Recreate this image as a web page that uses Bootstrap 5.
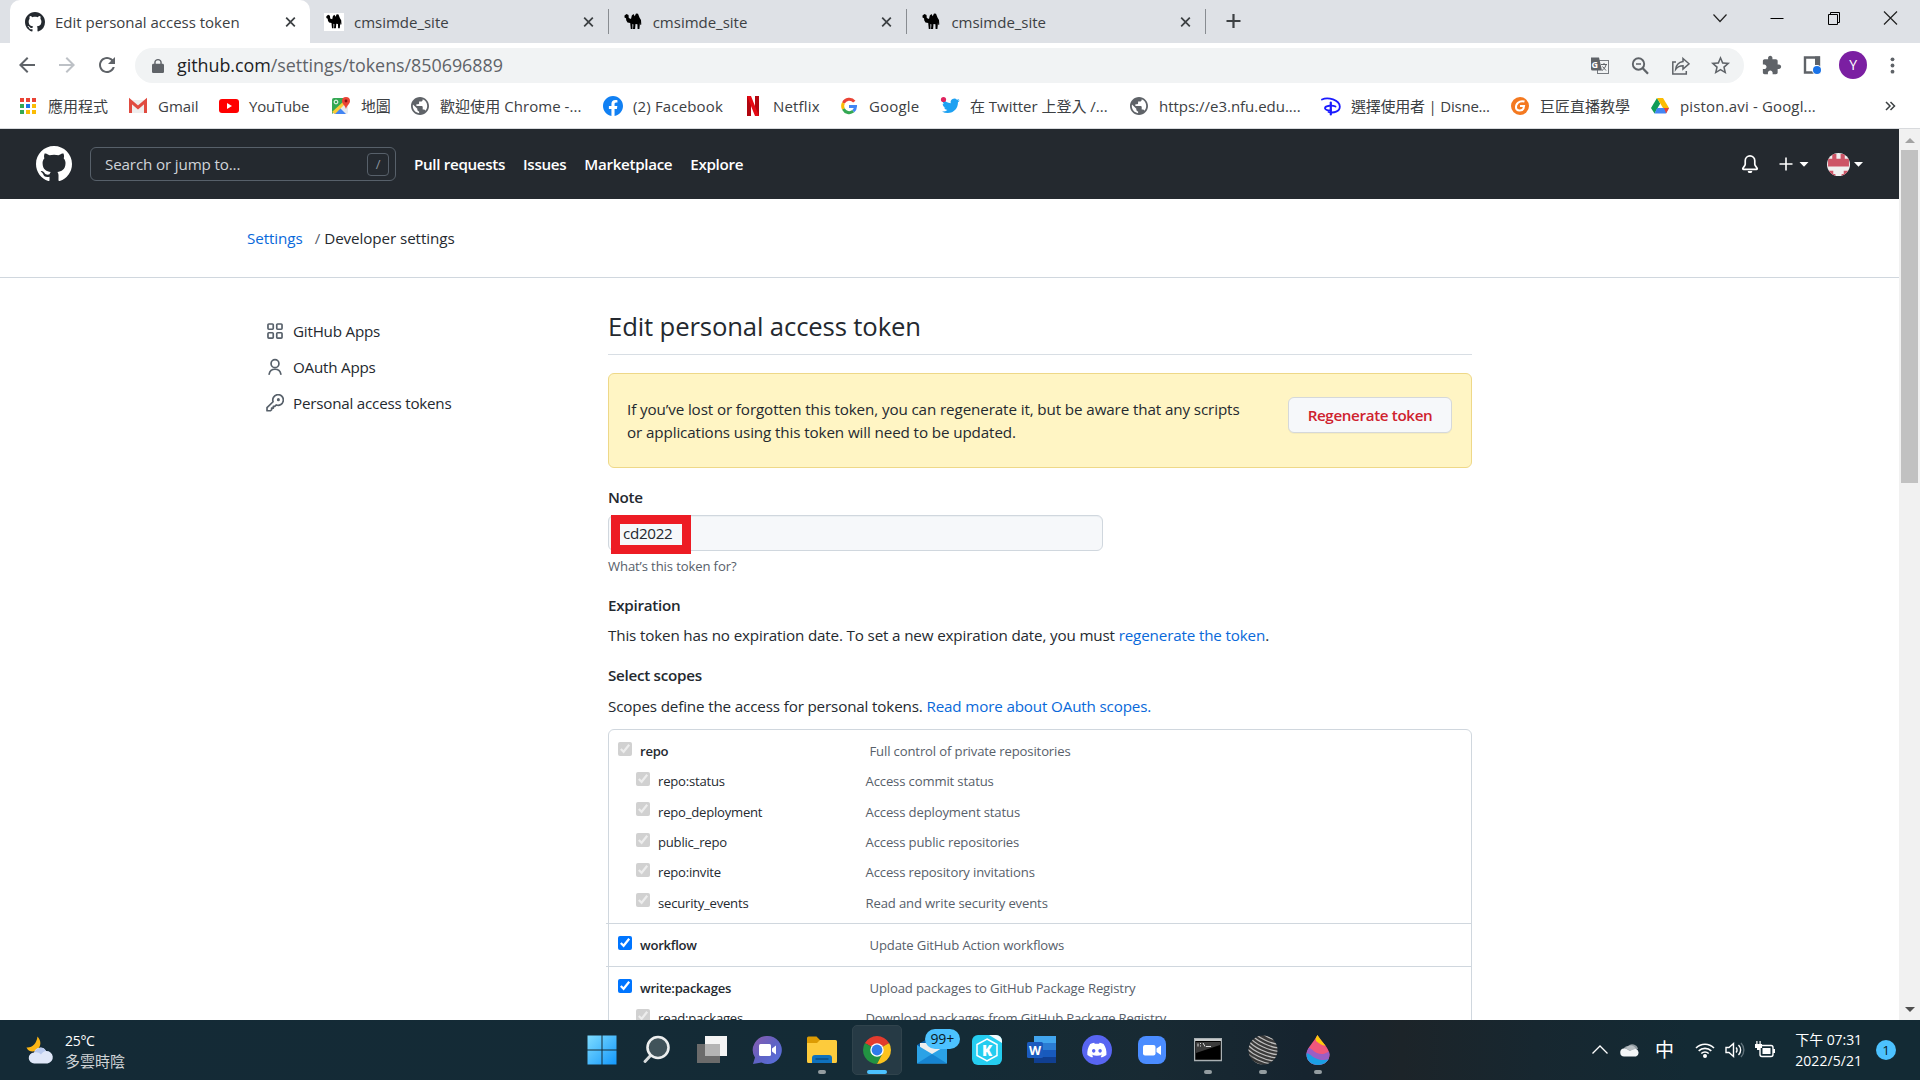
<!DOCTYPE html>
<html lang="zh-Hant">
<head>
<meta charset="utf-8">
<meta name="viewport" content="width=device-width, initial-scale=1">
<title>Edit personal access token</title>
<link href="https://cdn.jsdelivr.net/npm/bootstrap@5.3.0/dist/css/bootstrap.min.css" rel="stylesheet">
<style>
body{font-family:"Open Sans","Noto Sans CJK TC",sans-serif;font-size:15.2px;letter-spacing:-.15px;color:#24292f;height:1080px;overflow:hidden;background:#fff}
a{text-decoration:none;color:#0969da}
svg{display:block;flex:none}
.semi{font-weight:600}

/* tab strip */
.tabstrip{height:43px;background:#dee1e6;padding-left:10px;font-size:15px;letter-spacing:-.01px;color:#3c4043}
.btab{width:298.700px;height:43px;padding:0 0 0 14px}
.btab svg.fav{margin-right:10px}
.btab span:not(.sepr){padding-top:1px}
.btab.on{width:300px;background:#fff;border-radius:10px 10px 0 0;padding:0 14px 0 15px}
.btab .sepr{width:1px;height:25px;background:#888c91;margin-left:14px}
.newtab{margin-left:17px;margin-bottom:1px}
.winbtns{gap:41px;padding-right:22px}
/* toolbar */
.toolbar{height:44px;padding-left:15px}
.omni{width:1609px;height:35px;border-radius:18px;background:#f1f3f4;margin-left:16px;padding:0 13px 0 17px;margin-top:1px}
.omni .url{font-size:17.9px;letter-spacing:-.03px;color:#5f6368;margin-left:13px;line-height:32px;padding-bottom:2px}
.omni .url b{font-weight:400;color:#202124}
.omni .acts{gap:20px}
.avatar{width:28px;height:28px;background:#7b1fa2;color:#fff;font-size:14px;line-height:28px}
/* bookmarks */
.bmarks{height:42px;padding:0 0 3px 18px;font-size:15px;letter-spacing:-.02px;color:#3c4043;border-bottom:1px solid #d8dadd;line-height:38px}
.bm{white-space:nowrap}
.bm svg{margin-right:10px}
.ls-w{letter-spacing:.16px}
.ls-n{letter-spacing:-.22px}
/* header */
.viewport{height:891px}
.gh{height:70px;background:#24292f;color:#fff;padding-left:36px}
.gh .find{width:306px;height:34px;border:1px solid #57606a;border-radius:6px;margin-left:18px;padding:0 6px 0 14px;color:#d0d4d9}
.slash{width:22px;height:23px;border:1px solid #57606a;border-radius:4px;font-size:13px;line-height:20px;color:#8b949e}
.ghnav{margin-left:18px;gap:18px;letter-spacing:-.33px}
.crumbs{height:79px;border-bottom:1px solid #d0d7de;padding-left:247px;letter-spacing:-.08px}
.side{width:608px;padding:35px 0 0 266px;letter-spacing:-.22px}
.side a{color:#24292f;height:36px}
.side svg{margin-right:9px}
.main{width:864px}
.ttl{font-size:25.7px;letter-spacing:-.14px;font-weight:400;line-height:40px;padding:29px 0 7px;border-bottom:1px solid #d8dee4}
.warn{height:95px;margin-top:18px;background:#fff5c4;border:1px solid #eed888;border-radius:6px;padding:23px 19px 0 18px;line-height:23px;letter-spacing:-.11px}
.btn-regen{width:164px;height:36px;border:1px solid #d5d8da;border-radius:6px;background:#f6f8fa;color:#cf222e;padding:0;line-height:35px;font-size:15.2px;letter-spacing:-.36px;box-shadow:0 1px 0 rgba(27,31,36,.04)}
.lbl{line-height:23px;letter-spacing:-.28px}
.note-in{width:495px;height:36px;border:1px solid #d0d7de;border-radius:6px;background:#f6f8fa;padding:0 14px;line-height:34px;letter-spacing:-.3px;box-shadow:inset 0 1px 0 rgba(208,215,222,.25)}
.redbox{position:absolute;left:2px;top:-1px;width:80px;height:39px;border:9px solid #ed1c24}
.fs13{font-size:13.1px;letter-spacing:-.12px}
.muted{color:#57606a}
.scopes{border:1px solid #d0d7de;border-radius:6px;height:400px;margin-top:11px}
.grp{border-top:1px solid #d0d7de;padding:6px 0 0 9px;margin-left:-3px;padding-left:10px}
.grp.first{border-top:0;height:193px}
.grp.mid{height:43px}
.sc{height:30.3px;line-height:30px;font-size:13.1px;letter-spacing:-.14px}
.sc input{width:14px;height:14px;margin:0 8px 5px 2px}
.sc .nm{width:229.5px;letter-spacing:-.27px}
.sc.kid{padding-left:18px}
.sc.kid .nm{width:207.5px;letter-spacing:-.22px}
.sc .ds{color:#57606a}
/* scrollbar */
.sbar{width:21px;background:#f1f1f1}
.thumb{width:17px;height:333px;background:#c1c1c1}
/* taskbar */
.taskbar{height:60px;background:linear-gradient(90deg,#142a36 0,#142b36 50%,#182a33 60%,#16242f 68%,#1c2429 73%,#172730 80%,#132a34 88%,#132a34 100%);color:#fff}
.wx{width:574.500px;padding-left:25px}
.wx .tx,.clock{font-size:14px;line-height:21px;letter-spacing:-.3px}
.wx .cj{font-size:15px;letter-spacing:0;color:#d0d4d6;line-height:20px}
.ico{width:55.05px;height:60px}
.ico .run{position:absolute;bottom:6px;left:50%;width:8px;height:4px;margin-left:-4px;border-radius:2px;background:#949da1}
.ico.act::before{content:"";position:absolute;left:2px;top:5px;width:50px;height:50px;border-radius:5px;background:#263a45;border:1px solid #30434c}
.ico.act .run{width:20px;margin-left:-10px;background:#4cc2ff}
.ico svg{position:relative}
.cnt{position:absolute;left:20px;top:9px;width:35px;height:20px;border-radius:10px;background:#4cc2ff;color:#0a1b25;font-size:14px;line-height:19px}
.ncount{width:20px;height:20px;background:#4cc2ff;color:#0b1c26;font-size:13.5px;line-height:20px;margin:0 24px 0 14px}
</style>
</head>
<body class="d-flex flex-column">

<svg width="0" height="0" class="position-absolute">
  <symbol id="octocat" viewBox="0 0 16 16"><path d="M8 0C3.58 0 0 3.58 0 8c0 3.54 2.29 6.53 5.47 7.59.4.07.55-.17.55-.38 0-.19-.01-.82-.01-1.49-2.01.37-2.53-.49-2.69-.94-.09-.23-.48-.94-.82-1.13-.28-.15-.68-.52-.01-.53.63-.01 1.08.58 1.23.82.72 1.21 1.87.87 2.33.66.07-.52.28-.87.51-1.07-1.78-.2-3.64-.89-3.64-3.95 0-.87.31-1.59.82-2.15-.08-.2-.36-1.02.08-2.12 0 0 .67-.21 2.2.82.64-.18 1.32-.27 2-.27.68 0 1.36.09 2 .27 1.53-1.04 2.2-.82 2.2-.82.44 1.1.16 1.92.08 2.12.51.56.82 1.27.82 2.15 0 3.07-1.87 3.75-3.65 3.95.29.25.54.73.54 1.48 0 1.07-.01 1.93-.01 2.2 0 .21.15.46.55.38A8.013 8.013 0 0016 8c0-4.42-3.58-8-8-8z"/></symbol>
  <symbol id="camel" viewBox="0 0 20 20"><path d="M1.500 3.500l2-1.500 2 1 .3 3L8 7l.8-3.600L10.500 2l1.200 2.200L13 1.500l2 .3 1.600 4 1.400 2.200.3 4.500-1 .5-.3-2.500-.6 6.500h-1.800l-.2-4.700-1.900-.3-.4 5H10l.4-4.500-1-.5.1 5H7.800l-.6-6L4.500 10.500 3.300 8.500 3 6.300 1.500 5.500z"/></symbol>
  <symbol id="x" viewBox="0 0 12 12"><path d="M1.300 1.300l9.400 9.400M10.700 1.300l-9.400 9.400" stroke="#3c4043" stroke-width="1.900" fill="none"/></symbol>
  <symbol id="globe" viewBox="2 2 20 20"><path fill="#5f6368" d="M12 2C6.480 2 2 6.480 2 12s4.480 10 10 10 10-4.480 10-10S17.520 2 12 2zm-1 17.930c-3.950-.49-7-3.850-7-7.930 0-.62.08-1.210.21-1.790L9 15v1c0 1.100.9 2 2 2v1.930zm6.900-2.540c-.26-.81-1-1.390-1.900-1.390h-1v-3c0-.55-.45-1-1-1H8v-2h2c.55 0 1-.45 1-1V7h2c1.100 0 2-.9 2-2v-.41c2.930 1.190 5 4.060 5 7.410 0 2.080-.8 3.970-2.100 5.390z"/></symbol>
</svg>

<!-- tab strip -->
<div class="tabstrip d-flex align-items-center flex-shrink-0">
  <div class="btab on d-flex align-items-center">
    <svg class="fav" width="20" height="20" fill="#24292f"><use href="#octocat"/></svg><span>Edit personal access token</span>
    <svg class="ms-auto" width="11" height="12"><use href="#x"/></svg>
  </div>
  <div class="btab d-flex align-items-center">
    <svg class="fav" width="20" height="18"><rect width="20" height="18" fill="#fff"/><use href="#camel"/></svg><span>cmsimde_site</span>
    <svg class="ms-auto" width="11" height="12"><use href="#x"/></svg><span class="sepr"></span>
  </div>
  <div class="btab d-flex align-items-center">
    <svg class="fav" width="20" height="20"><use href="#camel"/></svg><span>cmsimde_site</span>
    <svg class="ms-auto" width="11" height="12"><use href="#x"/></svg><span class="sepr"></span>
  </div>
  <div class="btab d-flex align-items-center">
    <svg class="fav" width="20" height="20"><use href="#camel"/></svg><span>cmsimde_site</span>
    <svg class="ms-auto" width="11" height="12"><use href="#x"/></svg><span class="sepr"></span>
  </div>
  <svg class="newtab" width="20" height="20" stroke="#3c4043" stroke-width="2.200"><path d="M10.500 3v14M3.500 10h14"/></svg>
  <div class="winbtns d-flex align-items-center ms-auto pb-2">
    <svg width="16" height="14" fill="none" stroke="#222" stroke-width="1.200"><path d="M1.500 3.500l6.500 7 6.500-7"/></svg>
    <svg width="16" height="14" stroke="#000"><path d="M1.500 7.500h13"/></svg>
    <svg width="16" height="14" fill="none" stroke="#000"><path d="M2.500 3.500h9v10h-9zM4.500 3V1.500h9v10H12"/></svg>
    <svg width="15" height="14" fill="none" stroke="#222" stroke-width="1.200"><path d="M1 .5l13 13M14 .5l-13 13"/></svg>
  </div>
</div>

<!-- toolbar -->
<div class="toolbar d-flex align-items-center flex-shrink-0">
  <svg width="24" height="24" viewBox="0 0 24 24" fill="#5f6368"><path d="M20 11H7.830l5.590-5.590L12 4l-8 8 8 8 1.410-1.410L7.830 13H20v-2z"/></svg>
  <svg class="ms-3" width="24" height="24" viewBox="0 0 24 24" fill="#bdc1c6"><path transform="matrix(-1 0 0 1 24 0)" d="M20 11H7.830l5.590-5.590L12 4l-8 8 8 8 1.410-1.410L7.830 13H20v-2z"/></svg>
  <svg class="ms-3" width="24" height="24" viewBox="0 0 24 24" fill="#5f6368"><path d="M17.650 6.350C16.200 4.900 14.210 4 12 4c-4.420 0-7.990 3.580-7.990 8s3.570 8 7.990 8c3.730 0 6.840-2.550 7.730-6h-2.080c-.82 2.330-3.040 4-5.650 4-3.310 0-6-2.690-6-6s2.690-6 6-6c1.660 0 3.140.69 4.220 1.780L13 11h7V4l-2.350 2.350z"/></svg>
  <div class="omni d-flex align-items-center">
    <svg width="12" height="14" viewBox="4 1 16 21" preserveAspectRatio="none" fill="#5f6368"><path d="M18 8h-1V6c0-2.760-2.240-5-5-5S7 3.240 7 6v2H6c-1.100 0-2 .9-2 2v10c0 1.100.9 2 2 2h12c1.100 0 2-.9 2-2V10c0-1.100-.9-2-2-2zM15.100 8H8.900V6c0-1.710 1.390-3.100 3.100-3.100s3.100 1.390 3.100 3.100v2z"/></svg>
    <span class="url"><b>github.com</b>/settings/tokens/850696889</span>
    <div class="acts d-flex align-items-center ms-auto">
      <svg width="20" height="20"><rect x="7.500" y="4.500" width="11" height="13" fill="#f1f3f4" stroke="#777b80"/><path d="M1 1.500h8l3 13H2.500a1.500 1.500 0 0 1-1.500-1.500z" fill="#5f6368"/><text x="1.500" y="11.500" font-size="9" font-weight="700" fill="#fff" font-family="Open Sans">G</text><path d="M11 8.500h6M14 7v1.500M16 9c-1 3-2.500 4.500-4 5.500M12.500 10.500l3.500 4" stroke="#5f6368" fill="none"/></svg>
      <svg width="20" height="20" fill="none" stroke="#5f6368"><circle cx="8.500" cy="8" r="5.700" stroke-width="1.900"/><path d="M12.500 12l5.500 5.700" stroke-width="2.300"/><path d="M6 8h5" stroke-width="1.500"/></svg>
      <svg width="20" height="20" fill="none" stroke="#5f6368" stroke-width="1.500"><path d="M6 6H2.800v12h13.500v-3"/><path d="M13 2.500l6 5.300L13 13v-3.200c-3.500 0-5.500 1-7.300 3.500.5-4.200 2.800-7 7.300-7.700z"/></svg>
      <svg width="21" height="21" viewBox="1 1 22 22" fill="#5f6368"><path d="M22 9.240l-7.190-.62L12 2 9.190 8.630 2 9.240l5.460 4.730L5.820 21 12 17.270 18.180 21l-1.630-7.030L22 9.240zM12 15.400l-3.760 2.270 1-4.280-3.320-2.880 4.380-.38L12 6.100l1.710 4.040 4.380.38-3.320 2.880 1 4.280L12 15.400z"/></svg>
    </div>
  </div>
  <svg style="margin-left:18px" width="20" height="20" viewBox="1 0 23 23" fill="#5f6368"><path d="M20.500 11H19V7c0-1.100-.9-2-2-2h-4V3.500C13 2.120 11.880 1 10.500 1S8 2.120 8 3.500V5H4c-1.100 0-1.990.9-1.990 2v3.800H3.500c1.490 0 2.700 1.210 2.700 2.700s-1.210 2.700-2.700 2.700H2V20c0 1.100.9 2 2 2h3.800v-1.500c0-1.490 1.210-2.700 2.700-2.700s2.700 1.210 2.700 2.700V22H17c1.100 0 2-.9 2-2v-4h1.500c1.380 0 2.500-1.120 2.500-2.500S21.880 11 20.500 11z"/></svg>
  <svg style="margin-left:20px" width="20" height="20"><path d="M3 2.500h14v15H3z" fill="none" stroke="#5f6368" stroke-width="2.400"/><path d="M13 1.500h5V10h-5z" fill="#5f6368"/><circle cx="15" cy="15" r="5" fill="#fff"/><circle cx="15" cy="15" r="4" fill="#1a73e8"/></svg>
  <span class="avatar rounded-circle text-center" style="margin-left:17px">Y</span>
  <svg style="margin-left:23px" width="5" height="17" fill="#5f6368"><circle cx="2.500" cy="2.300" r="1.900"/><circle cx="2.500" cy="8.500" r="1.900"/><circle cx="2.500" cy="14.700" r="1.900"/></svg>
</div>

<!-- bookmarks -->
<div class="bmarks d-flex align-items-center flex-shrink-0">
  <div class="bm d-flex align-items-center" style="width:110px"><svg width="20" height="20"><g fill="#ea4335"><path d="M2 2h4v4H2zM8 2h4v4H8zM14 2h4v4h-4z"/></g><path d="M2 8h4v4H2zM2 14h4v4H2z" fill="#34a853"/><path d="M8 8h4v4H8z" fill="#1a73e8"/><path d="M14 8h4v4h-4zM8 14h4v4H8zM14 14h4v4h-4z" fill="#fbbc04"/></svg>應用程式</div>
  <div class="bm d-flex align-items-center" style="width:91px"><svg width="20" height="20"><path d="M1 4h18v13H1z" fill="#eee"/><path d="M2.500 17V5l7.500 6.500L17.500 5v12" fill="none" stroke="#e04b40" stroke-width="3"/></svg>Gmail</div>
  <div class="bm ls-n d-flex align-items-center" style="width:112px"><svg width="20" height="20"><rect y="3" width="20" height="14" rx="3" fill="#f00"/><path d="M8 7v6l5-3z" fill="#fff"/></svg>YouTube</div>
  <div class="bm ls-n d-flex align-items-center" style="width:79px"><svg width="20" height="20"><rect x="1" y="2" width="16" height="16" rx="2" fill="#e8eaed"/><path d="M1 4a2 2 0 0 1 2-2h9v6L1 18z" fill="#34a853"/><path d="M3 18l6-6 6 6z" fill="#4285f4"/><path d="M1 16L13 5l2 2L4 18z" fill="#fbcb37"/><path d="M15 1a4 4 0 0 1 4 4c0 3-3 4-4 8-1-4-4-5-4-8a4 4 0 0 1 4-4z" fill="#ea4335"/><circle cx="15" cy="5" r="1.400" fill="#811"/><circle cx="5" cy="6" r="1.900" fill="none" stroke="#fff"/></svg>地圖</div>
  <div class="bm d-flex align-items-center" style="width:193px;letter-spacing:.06px"><svg width="20" height="20"><use href="#globe" x="1" y="1" width="18" height="18"/></svg>歡迎使用 Chrome -...</div>
  <div class="bm ls-w d-flex align-items-center" style="width:140px"><svg width="20" height="20" viewBox="0 0 24 24" fill="#1180f3"><path d="M24 12.073c0-6.627-5.373-12-12-12s-12 5.373-12 12c0 5.990 4.388 10.954 10.125 11.854v-8.385H7.078v-3.470h3.047V9.430c0-3.007 1.792-4.669 4.533-4.669 1.312 0 2.686.235 2.686.235v2.953H15.830c-1.491 0-1.956.925-1.956 1.874v2.250h3.328l-.532 3.470h-2.796v8.385C19.612 23.027 24 18.062 24 12.073z"/></svg>(2) Facebook</div>
  <div class="bm ls-w d-flex align-items-center" style="width:96px"><svg width="20" height="20"><path d="M4 0h4v20H4zM12 0h4v20h-4z" fill="#b1060f"/><path d="M4 0h4l8 20h-4z" fill="#e50914"/></svg>Netflix</div>
  <div class="bm ls-w d-flex align-items-center" style="width:101px"><svg width="20" height="20" fill="none" stroke-width="3"><path d="M15.300 5.600A6.400 6.400 0 0 0 4.400 7" stroke="#ea4335"/><path d="M4.400 7a6.600 6.600 0 0 0 0 6" stroke="#fbbc05"/><path d="M4.400 13a6.500 6.500 0 0 0 9.900 2.200" stroke="#34a853"/><path d="M14.300 15.200a6.500 6.500 0 0 0 2.200-4.700H10" stroke="#4285f4"/></svg>Google</div>
  <div class="bm d-flex align-items-center" style="width:189px"><svg width="20" height="20"><g transform="translate(2 1) scale(.74)"><path fill="#1da1f2" d="M23.953 4.570a10 10 0 01-2.825.775 4.958 4.958 0 002.163-2.723c-.951.555-2.005.959-3.127 1.184a4.920 4.920 0 00-8.384 4.482C7.690 8.095 4.067 6.130 1.640 3.162a4.822 4.822 0 00-.666 2.475c0 1.710.87 3.213 2.188 4.096a4.904 4.904 0 01-2.228-.616v.06a4.923 4.923 0 003.946 4.827 4.996 4.996 0 01-2.212.085 4.936 4.936 0 004.604 3.417 9.867 9.867 0 01-6.102 2.105c-.39 0-.779-.023-1.170-.067a13.995 13.995 0 007.557 2.209c9.053 0 13.998-7.496 13.998-13.985 0-.21 0-.42-.015-.63A9.935 9.935 0 0024 4.590z"/></g><circle cx="3.500" cy="3.500" r="2.600" fill="#e0245e"/></svg>在 Twitter 上登入 /...</div>
  <div class="bm d-flex align-items-center" style="width:192px"><svg width="20" height="20"><use href="#globe" x="1" y="1" width="18" height="18"/></svg>https://e3.nfu.edu....</div>
  <div class="bm ls-n d-flex align-items-center" style="width:189px"><svg width="20" height="20" fill="none" stroke="#1a1aff" stroke-width="1.800" stroke-linecap="round"><path d="M1 3.500C7 .5 18.500 4 18.800 10.500c.2 5-6 7-11.300 5.500"/><path d="M9.800 6.500v12" stroke-width="2.200"/><path d="M14.500 10.500c-3-1.500-10-1-10.500 1.500-.3 2 4 2.800 6 2"/></svg>選擇使用者 | Disne...</div>
  <div class="bm d-flex align-items-center" style="width:140px"><svg width="20" height="20"><circle cx="10" cy="10" r="9" fill="#f47920"/><path d="M14.500 5.500C9 4 5.500 8 6 12c.5 3 6 3.500 7.500.5l.5-2.500h-4" fill="none" stroke="#fff" stroke-width="2"/></svg>巨匠直播教學</div>
  <div class="bm ls-w d-flex align-items-center"><svg width="20" height="20"><path d="M7 2l3.200 5.500L4.500 17.500 1 12z" fill="#0f9d58"/><path d="M7 2h6l6 10h-6z" fill="#fbbc04"/><path d="M7.200 12H19l-3.200 5.500H4.500z" fill="#4285f4"/><path d="M14 12h5l-2.800 5.500z" fill="#ea4335"/></svg>piston.avi - Googl...</div>
  <svg class="ms-auto me-4" width="11" height="10" fill="none" stroke="#3c4043" stroke-width="1.500"><path d="M1 1l4 4-4 4M5.500 1l4 4-4 4"/></svg>
</div>

<!-- page -->
<div class="viewport d-flex overflow-hidden flex-shrink-0">
  <div class="flex-grow-1">
    <header class="gh d-flex align-items-center">
      <svg width="36" height="36" fill="#fff"><use href="#octocat"/></svg>
      <div class="find d-flex align-items-center"><span>Search or jump to...</span><span class="slash ms-auto text-center">/</span></div>
      <nav class="ghnav d-flex semi"><span>Pull requests</span><span>Issues</span><span>Marketplace</span><span>Explore</span></nav>
      <div class="d-flex align-items-center ms-auto" style="padding-right:36px">
        <svg width="18" height="18" viewBox="0 0 16 16" fill="none" stroke="#fff" stroke-width="1.500"><path d="M3.750 7.950V5a4.250 4.250 0 0 1 8.500 0v2.950c0 .5.100.9.400 1.350l1.650 2.500c.3.500 0 .9-.5.900H2.200c-.5 0-.8-.4-.5-.9l1.650-2.500c.3-.45.4-.85.4-1.350z"/><path d="M6 14.200h4a2 2 0 0 1-4 0z" fill="#fff" stroke="none"/></svg>
        <svg style="margin-left:19px" width="16" height="16" stroke="#fff" stroke-width="1.600"><path d="M8 1.500v13M1.500 8h13"/></svg>
        <svg style="margin-left:5px" width="10" height="5" fill="#fff"><path d="M.5 0h9L5 4.700z"/></svg>
        <svg style="margin-left:18px" width="23" height="23" viewBox="0 0 22 22"><clipPath id="av"><circle cx="11" cy="11" r="11"/></clipPath><g clip-path="url(#av)"><path d="M0 0h22v22H0z" fill="#f0f0f0"/><path d="M5 1h4v4.500h4V1h4v4.500h4v7.500H1V5.500h4zM1 17h5v3h2v2H2zM21 17h-5v3h-2v2h6z" fill="#cd5567"/></g></svg>
        <svg style="margin-left:4px" width="9" height="5" fill="#fff"><path d="M0 0h9L4.500 4.700z"/></svg>
      </div>
    </header>
    <div class="crumbs d-flex align-items-center"><a href="#">Settings</a><span class="muted" style="margin:0 4px 0 12px">/</span><span>Developer settings</span></div>
    <div class="d-flex">
      <aside class="side d-flex flex-column flex-shrink-0">
        <a href="#" class="d-flex align-items-center"><svg width="18" height="18" viewBox="0 0 16 16" fill="none" stroke="#57606a" stroke-width="1.500"><rect x="1.750" y="1.750" width="4.700" height="4.700" rx=".8"/><rect x="9.550" y="1.750" width="4.700" height="4.700" rx=".8"/><rect x="1.750" y="9.550" width="4.700" height="4.700" rx=".8"/><rect x="9.550" y="9.550" width="4.700" height="4.700" rx=".8"/></svg>GitHub Apps</a>
        <a href="#" class="d-flex align-items-center"><svg width="18" height="18" viewBox="0 0 16 16" fill="none" stroke="#57606a" stroke-width="1.500" stroke-linecap="round"><circle cx="8" cy="5" r="3.500"/><path d="M2.800 14.300a5.300 5.300 0 0 1 10.400 0"/></svg>OAuth Apps</a>
        <a href="#" class="d-flex align-items-center"><svg width="18" height="18" viewBox="0 0 16 16" fill="none" stroke="#57606a" stroke-width="1.500" stroke-linejoin="round"><path d="M6.300 6.900a4.700 4.700 0 1 1 2.900 2.850L7.800 11H6.500v1.500H5v1.400l-1 1H.9v-2.800z"/><circle cx="11" cy="5" r=".6" fill="#57606a"/></svg>Personal access tokens</a>
      </aside>
      <main class="main">
        <h2 class="ttl m-0">Edit personal access token</h2>
        <div class="warn d-flex justify-content-between align-items-start">
          <div class="text-nowrap" style="padding-top:1px">If you’ve lost or forgotten this token, you can regenerate it, but be aware that any scripts<br>or applications using this token will need to be updated.</div>
          <button class="btn btn-regen semi">Regenerate token</button>
        </div>
        <div class="lbl semi" style="margin-top:18px">Note</div>
        <div class="note-in position-relative" style="margin-top:6px">cd2022<span class="redbox"></span></div>
        <div class="fs13 muted" style="margin-top:5px;line-height:20px">What’s this token for?</div>
        <div class="lbl semi" style="margin-top:18px">Expiration</div>
        <div style="margin-top:7px;line-height:23px">This token has no expiration date. To set a new expiration date, you must <a href="#">regenerate the token</a>.</div>
        <div class="lbl semi" style="margin-top:17px">Select scopes</div>
        <div style="margin-top:8px;line-height:23px">Scopes define the access for personal tokens. <a href="#">Read more about OAuth scopes.</a></div>
        <div class="scopes">
          <div class="grp first">
            <div class="sc d-flex align-items-center"><input type="checkbox" checked disabled><span class="nm semi">repo</span><span class="ds">Full control of private repositories</span></div>
            <div class="sc kid d-flex align-items-center"><input type="checkbox" checked disabled><span class="nm">repo:status</span><span class="ds">Access commit status</span></div>
            <div class="sc kid d-flex align-items-center"><input type="checkbox" checked disabled><span class="nm">repo_deployment</span><span class="ds">Access deployment status</span></div>
            <div class="sc kid d-flex align-items-center"><input type="checkbox" checked disabled><span class="nm">public_repo</span><span class="ds">Access public repositories</span></div>
            <div class="sc kid d-flex align-items-center"><input type="checkbox" checked disabled><span class="nm">repo:invite</span><span class="ds">Access repository invitations</span></div>
            <div class="sc kid d-flex align-items-center"><input type="checkbox" checked disabled><span class="nm">security_events</span><span class="ds">Read and write security events</span></div>
          </div>
          <div class="grp mid">
            <div class="sc d-flex align-items-center"><input type="checkbox" checked><span class="nm semi">workflow</span><span class="ds">Update GitHub Action workflows</span></div>
          </div>
          <div class="grp">
            <div class="sc d-flex align-items-center"><input type="checkbox" checked><span class="nm semi">write:packages</span><span class="ds">Upload packages to GitHub Package Registry</span></div>
            <div class="sc kid d-flex align-items-center"><input type="checkbox" checked disabled><span class="nm">read:packages</span><span class="ds">Download packages from GitHub Package Registry</span></div>
          </div>
        </div>
      </main>
    </div>
  </div>
  <div class="sbar d-flex flex-column align-items-center flex-shrink-0">
    <svg width="10" height="21" fill="#a3a3a3"><path d="M0 14l5-5 5 5z"/></svg>
    <div class="thumb"></div>
    <svg class="mt-auto" width="10" height="21" fill="#505050"><path d="M0 8l5 5 5-5z"/></svg>
  </div>
</div>

<!-- taskbar -->
<div class="taskbar d-flex align-items-center flex-shrink-0">
  <div class="wx d-flex align-items-center">
    <svg width="29" height="30"><path d="M12.500 1.500c4 4.500 4 10-1 14C7 18 3 16 1.500 12.500c6 .5 10-4 11-11z" fill="#fcb514"/><path d="M9.500 28.500a5.500 5.500 0 0 1-.5-11 6.500 6.500 0 0 1 12-1.500 6.300 6.300 0 0 1 1.500 12.500z" fill="#dfe7f8"/><path d="M9.500 17.500a6.300 6.300 0 0 1 11.500-1.500c-3 .5-4 2-5 3.500-2-2-4-2.500-6.500-2z" fill="#b9caee"/></svg>
    <div class="tx" style="margin-left:11px"><div>25°C</div><div class="cj">多雲時陰</div></div>
  </div>
  <div class="ico position-relative d-flex align-items-center justify-content-center"><svg width="30" height="30"><defs><linearGradient id="wn" x2="1" y2="1"><stop offset="0" stop-color="#7fdcff"/><stop offset="1" stop-color="#1398fb"/></linearGradient></defs><path d="M.5.500h14v14H.5zM15.500.500h14v14h-14zM.5 15.500h14v14H.5zM15.500 15.500h14v14h-14z" fill="url(#wn)"/></svg></div>
  <div class="ico position-relative d-flex align-items-center justify-content-center"><svg width="30" height="30"><path d="M9.500 19.500L3 26.500" stroke="#d8dcdd" stroke-width="3" stroke-linecap="round"/><circle cx="16" cy="12.500" r="10.500" fill="#41535a" stroke="#eceeee" stroke-width="2.600"/></svg></div>
  <div class="ico position-relative d-flex align-items-center justify-content-center"><svg width="30" height="30"><path d="M8 1h22v20H8z" fill="#f4f4f4"/><path d="M0 9h23v19H0z" fill="#6b6b6b"/><path d="M8 9h15v12H8z" fill="#b4b4b4"/></svg></div>
  <div class="ico position-relative d-flex align-items-center justify-content-center"><svg width="30" height="30"><defs><linearGradient id="ch" x2="1" y2="1"><stop offset="0" stop-color="#8a5cae"/><stop offset=".5" stop-color="#6062c4"/><stop offset="1" stop-color="#5672e0"/></linearGradient></defs><path d="M15.500 1a14 14 0 1 1-6 26.500L1 29l2-6.500A14 14 0 0 1 15.500 1z" fill="url(#ch)"/><rect x="7" y="9" width="12" height="12" rx="1.500" fill="#fff"/><path d="M20 13.500l4-3v9l-4-3z" fill="#fff"/></svg></div>
  <div class="ico position-relative d-flex align-items-center justify-content-center"><svg width="30" height="30"><path d="M0 3a1.500 1.500 0 0 1 1.500-1.500h8L13 5h5v5H0z" fill="#dc9b03"/><path d="M0 8h10l3-3h15.500A1.500 1.500 0 0 1 30 6.500v20a1.500 1.500 0 0 1-1.500 1.500h-27A1.500 1.500 0 0 1 0 26.500z" fill="#fdcb3c"/><path d="M5 28v-5a3 3 0 0 1 3-3h14a3 3 0 0 1 3 3v5z" fill="#0f71bd"/><path d="M8.500 24h13" stroke="#0a4b83" stroke-width="1.500"/></svg><i class="run"></i></div>
  <div class="ico act position-relative d-flex align-items-center justify-content-center"><svg width="28" height="28" viewBox="-14 -14 28 28"><path d="M0 0L-12.100-7A14 14 0 0 1 12.100-7z" fill="#e33b2e"/><path d="M0 0L12.100-7A14 14 0 0 1 0 14z" fill="#fcc31e"/><path d="M0 0L0 14A14 14 0 0 1-12.100-7z" fill="#229342"/><path d="M-12.100-7L12.100-7 0-4zM5.600 3.200L0 14-3 5z" fill="#e33b2e"/><path d="M5.600 3.200L0 14 12.500 0z" fill="#fcc31e"/><path d="M-6 3L0 14 5.600 3.200z" fill="#229342"/><circle r="6.700" fill="#fff"/><circle r="5.400" fill="#2f7bea"/></svg><i class="run"></i></div>
  <div class="ico position-relative d-flex align-items-center justify-content-center"><svg width="30" height="30"><path d="M0 10l15-9 15 9v10H0z" fill="#0b5da3"/><path d="M3 8h24v7l-12 7L3 15z" fill="#eee"/><path d="M0 10l15 9 15-9v18.500H0z" fill="#2ba2e6"/><path d="M0 28.500L15 19l15 9.500z" fill="#1784d1"/></svg><span class="cnt text-center">99+</span></div>
  <div class="ico position-relative d-flex align-items-center justify-content-center"><svg width="30" height="30"><rect width="30" height="30" rx="6" fill="#25cdf0"/><path d="M15 4l10 5.500v11L15 26 5 20.500v-11z" fill="none" stroke="#fff" stroke-width="1.500"/><path d="M17 0h7a6 6 0 0 1 6 6v2z" fill="#f4fbfd"/><text x="15" y="20.500" font-size="15" font-weight="800" text-anchor="middle" fill="#fff" font-family="Open Sans">K</text></svg></div>
  <div class="ico position-relative d-flex align-items-center justify-content-center"><svg width="30" height="30"><path d="M7 1h22v7H7z" fill="#41a5ee"/><path d="M7 8h22v7H7z" fill="#2b7cd3"/><path d="M7 15h22v7H7z" fill="#185abd"/><path d="M7 22h22v6H7z" fill="#103f91"/><rect y="7" width="16" height="16" rx="1.500" fill="#1b5bbe"/><text x="8" y="19.500" font-size="12.500" font-weight="700" text-anchor="middle" fill="#fff" font-family="Open Sans" letter-spacing="0">W</text></svg></div>
  <div class="ico position-relative d-flex align-items-center justify-content-center"><svg width="30" height="30"><circle cx="15" cy="15" r="15" fill="#5865f2"/><g transform="translate(5.300 5.500) scale(.8)"><path fill="#fff" d="M20.317 4.370a19.791 19.791 0 00-4.885-1.515.074.074 0 00-.079.037c-.211.375-.445.865-.608 1.250-1.845-.276-3.680-.276-5.487 0-.164-.393-.406-.874-.618-1.250a.077.077 0 00-.079-.037 19.736 19.736 0 00-4.885 1.515.07.07 0 00-.032.028C.533 9.046-.319 13.580.099 18.058a.082.082 0 00.031.056c2.053 1.508 4.041 2.423 5.993 3.029a.078.078 0 00.084-.028c.462-.63.873-1.295 1.226-1.994a.076.076 0 00-.042-.106c-.653-.248-1.274-.55-1.872-.892a.077.077 0 01-.008-.128c.126-.094.252-.192.372-.291a.074.074 0 01.078-.011c3.928 1.793 8.180 1.793 12.061 0a.074.074 0 01.079.01c.12.099.246.198.373.292a.077.077 0 01-.007.128 12.299 12.299 0 01-1.873.891.077.077 0 00-.041.107c.36.698.772 1.363 1.225 1.993a.076.076 0 00.084.029c1.961-.607 3.950-1.522 6.002-3.029a.077.077 0 00.031-.055c.5-5.177-.838-9.674-3.549-13.660a.061.061 0 00-.031-.029zM8.020 15.331c-1.183 0-2.157-1.086-2.157-2.419 0-1.333.956-2.419 2.157-2.419 1.211 0 2.176 1.095 2.157 2.419 0 1.333-.956 2.419-2.157 2.419zm7.975 0c-1.183 0-2.157-1.086-2.157-2.419 0-1.333.955-2.419 2.157-2.419 1.211 0 2.176 1.095 2.157 2.419 0 1.333-.946 2.419-2.157 2.419z"/></g></svg></div>
  <div class="ico position-relative d-flex align-items-center justify-content-center"><svg width="28" height="28"><rect width="28" height="28" rx="8" fill="#4a8cff"/><rect x="5" y="9" width="12.500" height="10.500" rx="2" fill="#fff"/><path d="M18.500 12.500L23 9.500v9.500l-4.500-3z" fill="#fff"/></svg></div>
  <div class="ico position-relative d-flex align-items-center justify-content-center"><svg width="28" height="24"><rect x=".5" y=".5" width="27" height="22" fill="#000" stroke="#a9b0b3" stroke-width="1.500"/><path d="M1 1h26v2H1z" fill="#c7cacb"/><path d="M2 4h24v3L14 11 2 15z" fill="#3b3b3b"/><path d="M4 5.500v3M6 5.500h1M6 8h1M9 5l2 3.500M12 8.500h5" stroke="#ddd" fill="none"/></svg><i class="run"></i></div>
  <div class="ico position-relative d-flex align-items-center justify-content-center"><svg width="30" height="30"><clipPath id="sp"><circle cx="15" cy="15" r="14.500"/></clipPath><g clip-path="url(#sp)"><path d="M0 0h30v30H0z" fill="#3a3a3a"/><g transform="rotate(22 15 15)"><path d="M-4 0c8 6 26 7 38 2M-4 3.500c8 6 26 7 38 2M-4 7c8 6 26 7 38 2M-4 10.500c8 6 26 7 38 2M-4 14c8 6 26 7 38 2M-4 17.500c8 6 26 7 38 2M-4 21c8 6 26 7 38 2M-4 24.500c8 6 26 7 38 2M-4 28c8 6 26 7 38 2M0-4c8 6 22 7 34 2" stroke="#bdbdbd" stroke-width="1.300" fill="none"/></g><path d="M0 16l12 14H0z" fill="#222" opacity=".35"/></g></svg><i class="run"></i></div>
  <div class="ico position-relative d-flex align-items-center justify-content-center"><svg width="30" height="32"><clipPath id="dr"><path d="M14.500 1C17 6 26.500 14 26.500 20.500 26.500 27 21 31 15 31S3.500 27 3.500 20.500C3.500 14 11 8 14.500 1z"/></clipPath><g clip-path="url(#dr)"><path d="M0 0h30v32H0z" fill="#f0577c"/><path d="M12 0h10l3 11c-4 2-8-1-12-4z" fill="#fccb0a"/><path d="M0 14c8-2 9 3 14 5s8 1 14-3v16H0z" fill="#9a5fc4"/><path d="M0 19c6-1 8 3 12 5s9 3 14 1v9H0z" fill="#1b9fe4"/></g></svg><i class="run"></i></div>

  <div class="d-flex align-items-center ms-auto">
    <svg width="18" height="12" fill="none" stroke="#fff" stroke-width="1.300"><path d="M1.500 9.500L9 2l7.500 7.500"/></svg>
    <svg style="margin-left:11px" width="20" height="14"><path d="M3 8a5 5 0 0 1 5-5 6 6 0 0 1 10 3l-8 4z" fill="#8f999f"/><path d="M4.500 13.500a4 4 0 0 1-.5-8c3 0 4 1.500 6 2.500 3-2 4-2 6-2a4 4 0 0 1 0 7.500z" fill="#f4f6f7"/><path d="M6 5.500c1-3 6-4.500 9-1l1.500 1.500c-3-.5-5 1-6.500 2C8.500 7 8 6 6 5.500z" fill="#b8bfc3"/></svg>
    <span style="margin-left:15px;font-size:19px;line-height:28px;width:20px">中</span>
    <svg style="margin-left:20px" width="20" height="16" fill="none" stroke="#fff" stroke-width="1.600"><path d="M1 6a12.700 12.700 0 0 1 18 0M3.700 8.900a9 9 0 0 1 12.600 0M6.300 11.500a5.300 5.300 0 0 1 7.400 0"/><circle cx="10" cy="14" r="1.200" fill="#fff"/></svg>
    <svg style="margin-left:10px" width="20" height="18" fill="none" stroke="#fff" stroke-width="1.400"><path d="M1 6.500h3L8.500 2.500v13L4 11.500H1zM11 6.500a3.500 3.500 0 0 1 0 5M13.500 4a7 7 0 0 1 0 10"/><path d="M16 2a10 10 0 0 1 0 14" stroke="#60717a"/></svg>
    <svg style="margin-left:10px" width="21" height="18"><rect x="5" y="4.500" width="13" height="11" rx="2" fill="none" stroke="#fff" stroke-width="1.400"/><path d="M7.500 7h8v6h-8zM18 8h2v4h-2zM0 3h7v4H5v2H2V7H0zM1.300 0h1.200v3H1.300zM4.500 0h1.200v3H4.500z" fill="#fff"/></svg>
    <div class="clock text-end" style="width:86px"><div style="letter-spacing:-.08px">下午 07:31</div><div style="letter-spacing:.05px">2022/5/21</div></div>
    <span class="ncount rounded-circle text-center">1</span>
  </div>
</div>
<script src="https://cdn.jsdelivr.net/npm/bootstrap@5.3.0/dist/js/bootstrap.bundle.min.js"></script>
</body>
</html>
